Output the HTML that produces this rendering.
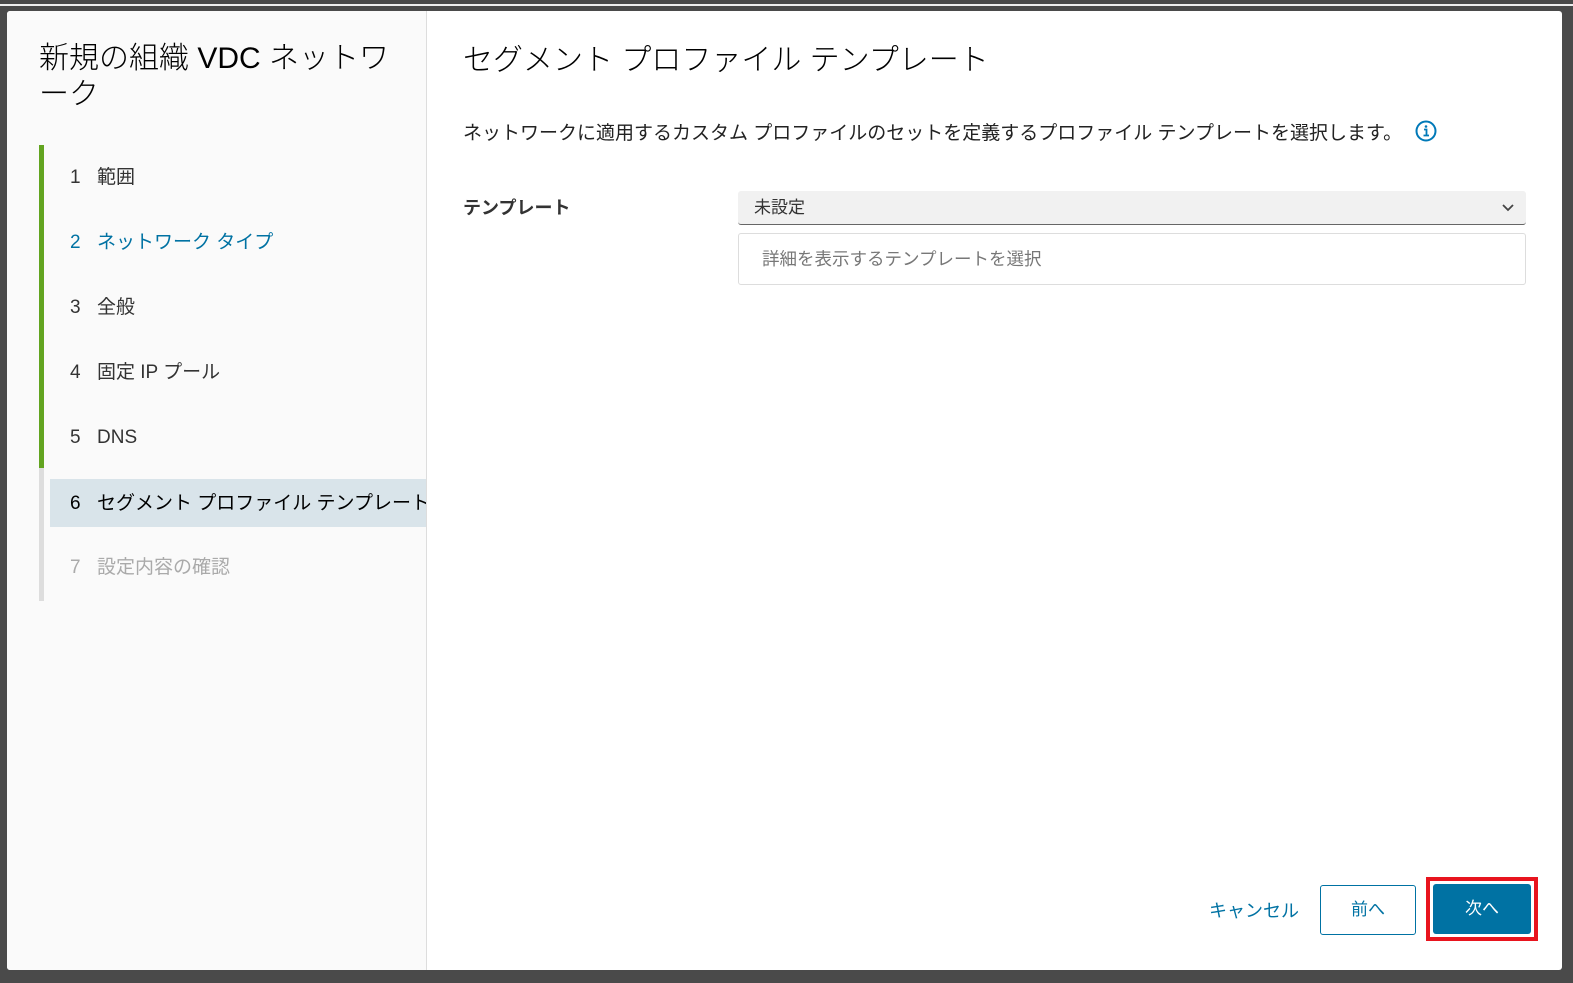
<!DOCTYPE html>
<html><head><meta charset="utf-8"><style>
*{margin:0;padding:0;box-sizing:border-box}
body{width:1573px;height:983px;background:#4a4a4a;font-family:"Liberation Sans","Noto Sans CJK JP",sans-serif;position:relative;overflow:hidden}
.topline{position:absolute;left:0;top:4px;width:1573px;height:2px;background:#eee}
.modal{position:absolute;left:7px;top:11px;width:1555px;height:959px;background:#fff;border-radius:3px;overflow:hidden}
.left{position:absolute;left:0;top:0;width:420px;height:959px;background:#fafafa;border-right:1px solid #ddd}
.title{position:absolute;left:32px;top:30px;font-size:30px;line-height:36px;color:#000;font-weight:300;width:370px}
.bar{position:absolute;left:32px;width:5px}
.item{position:absolute;left:43px;width:376px;height:48px;font-size:19px;line-height:48px;padding-left:20px;color:#333}
.item .n{display:inline-block;width:27px}
h1{position:absolute;left:456px;top:24px;font-size:30px;font-weight:300;color:#000}
.desc{position:absolute;left:456px;top:107px;font-size:19px;color:#222;white-space:nowrap}
.info{position:absolute;left:1408px;top:109px}
.lbl{position:absolute;left:456px;top:183px;font-size:18px;font-weight:bold;color:#333}
.sel{position:absolute;left:731px;top:180px;width:788px;height:34px;background:#f1f1f1;border-radius:3px;border-bottom:1px solid #666;font-size:17px;line-height:34px;padding-left:16px;color:#333}
.box{position:absolute;left:731px;top:222px;width:788px;height:52px;border:1px solid #ddd;border-radius:3px;font-size:17.5px;line-height:50px;padding-left:23px;color:#777}
.cancel{position:absolute;left:1202px;top:886px;font-size:18px;color:#0072a3}
.prev{position:absolute;left:1313px;top:874px;width:96px;height:50px;border:1px solid #0072a3;border-radius:3px;color:#0072a3;font-size:17px;text-align:center;line-height:48px}
.red{position:absolute;left:1419px;top:866px;width:112px;height:64px;border:4px solid #e8141e}
.next{position:absolute;left:1426px;top:873px;width:98px;height:50px;background:#0072a3;border-radius:3px;color:#fff;font-size:17px;text-align:center;line-height:50px}
</style></head><body>
<div class="topline"></div>
<div class="modal">
<div class="left">
<div class="title">新規の組織 VDC ネットワーク</div>
<div class="bar" style="top:134px;height:323px;background:#62a420"></div>
<div class="bar" style="top:457px;height:133px;background:#ddd"></div>
<div class="item" style="top:143px"><span class="n">1</span>範囲</div>
<div class="item" style="top:208px;color:#0072a3"><span class="n">2</span>ネットワーク タイプ</div>
<div class="item" style="top:273px"><span class="n">3</span>全般</div>
<div class="item" style="top:338px"><span class="n">4</span>固定 IP プール</div>
<div class="item" style="top:403px"><span class="n">5</span>DNS</div>
<div class="item" style="top:468px;line-height:50px;background:#d9e4ea;color:#000;white-space:nowrap;overflow:hidden"><span class="n">6</span>セグメント プロファイル テンプレート</div>
<div class="item" style="top:533px;color:#aaa"><span class="n">7</span>設定内容の確認</div>
</div>
<h1>セグメント プロファイル テンプレート</h1>
<div class="desc">ネットワークに適用するカスタム プロファイルのセットを定義するプロファイル テンプレートを選択します。</div>
<svg class="info" width="22" height="22" viewBox="0 0 22 22"><circle cx="11" cy="11" r="9.5" fill="none" stroke="#0079b8" stroke-width="2"/><circle cx="11" cy="6.5" r="1.3" fill="#0079b8"/><path d="M9 9.5h2.5v6M8.5 15.5h5.5" stroke="#0079b8" stroke-width="1.8" fill="none"/></svg>
<div class="lbl">テンプレート</div>
<div class="sel">未設定<svg style="position:absolute;right:12px;top:13px" width="12" height="8" viewBox="0 0 12 8"><path d="M1 1l5 5 5-5" stroke="#444" stroke-width="1.8" fill="none"/></svg></div>
<div class="box">詳細を表示するテンプレートを選択</div>
<div class="cancel">キャンセル</div>
<div class="prev">前へ</div>
<div class="red"></div>
<div class="next">次へ</div>
</div>
</body></html>
